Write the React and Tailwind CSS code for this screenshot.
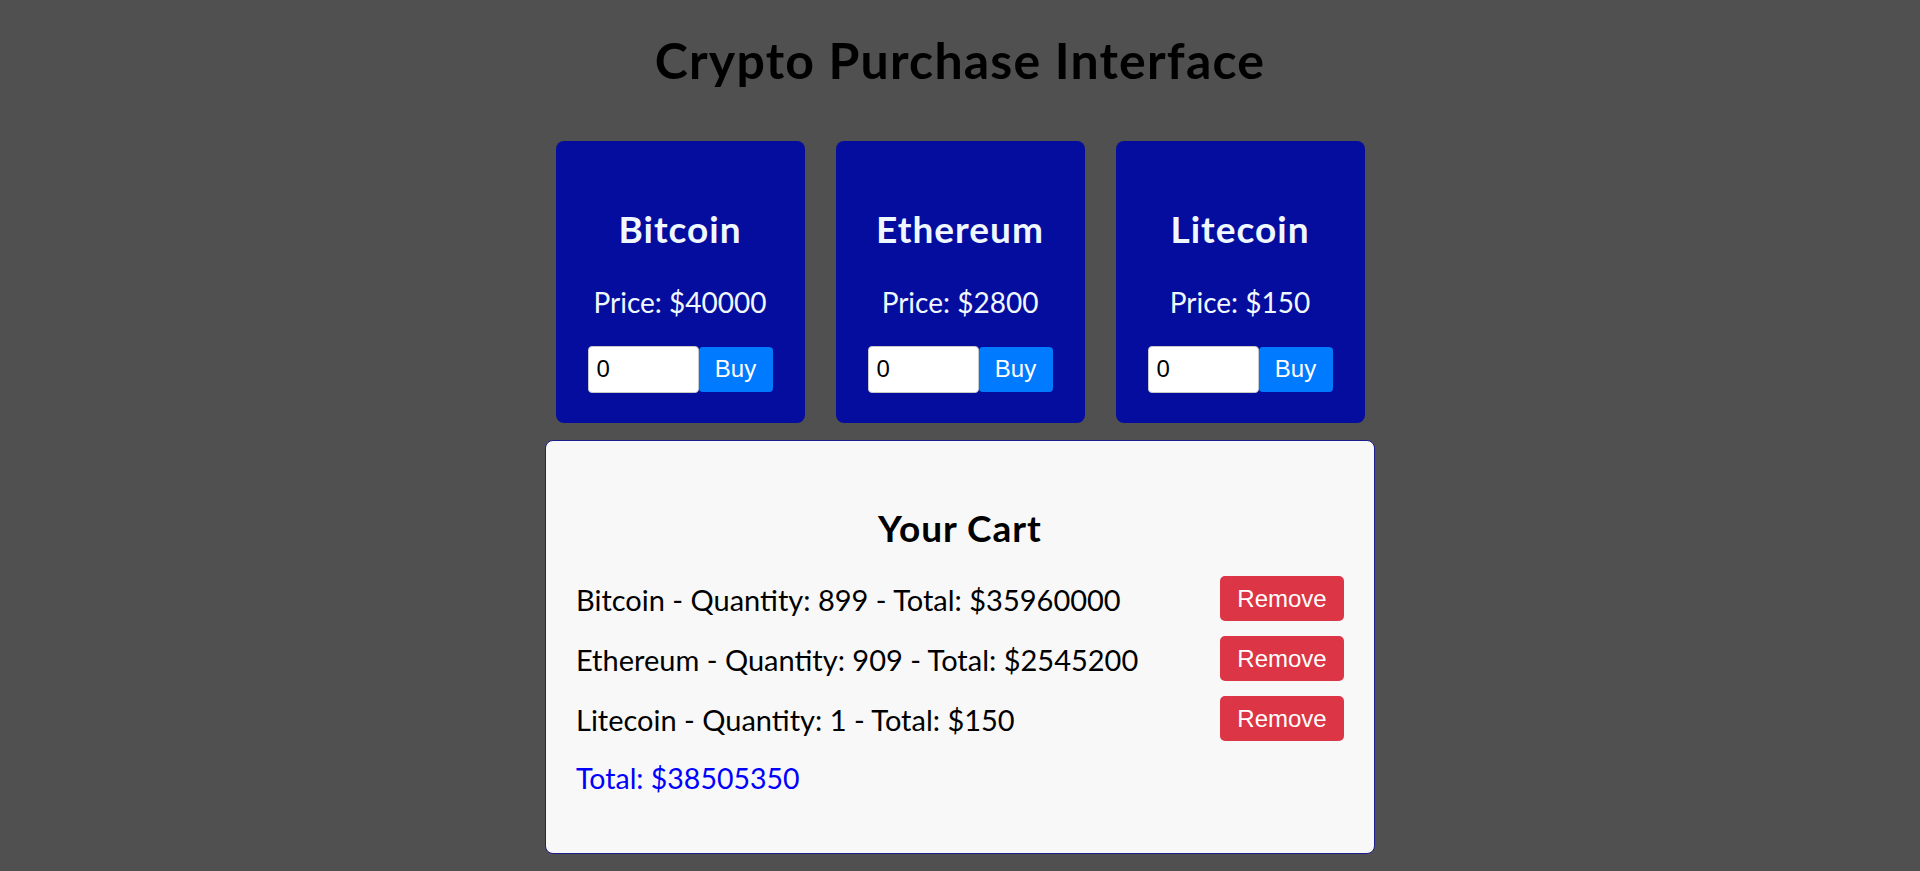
import React, { useState } from 'react';

const coins = [
  { name: 'Bitcoin', price: 40000 },
  { name: 'Ethereum', price: 2800 },
  { name: 'Litecoin', price: 150 },
];

const initialCart = [
  { name: 'Bitcoin', price: 40000, quantity: 899 },
  { name: 'Ethereum', price: 2800, quantity: 909 },
  { name: 'Litecoin', price: 150, quantity: 1 },
];

const App = () => {
  const [cart, setCart] = useState(initialCart);
  const [amounts, setAmounts] = useState({ Bitcoin: 0, Ethereum: 0, Litecoin: 0 });

  const buy = (coin) => {
    const qty = Number(amounts[coin.name]) || 0;
    if (qty <= 0) return;
    setCart((prev) => {
      const found = prev.find((c) => c.name === coin.name);
      if (found) {
        return prev.map((c) => (c.name === coin.name ? { ...c, quantity: c.quantity + qty } : c));
      }
      return [...prev, { ...coin, quantity: qty }];
    });
  };

  const removeItem = (name) => setCart((prev) => prev.filter((c) => c.name !== name));

  const total = cart.reduce((sum, c) => sum + c.price * c.quantity, 0);

  return (
    <div
      className="min-h-[871px] bg-[#505050] flex flex-col items-center"
      style={{ fontFamily: 'Lato, "Open Sans", sans-serif' }}
    >
      <h1 className="pt-[30px] text-[50px] leading-[1.2] font-bold tracking-[1.2px] text-black">
        Crypto Purchase Interface
      </h1>

      {/* Coin cards */}
      <div className="mt-[51px] flex gap-[31px]">
        {coins.map((coin) => (
          <div
            key={coin.name}
            className="w-[249px] h-[282px] bg-[#050d9f] rounded-[8px] flex flex-col items-center pt-[66px] text-[#f0f8ff]"
          >
            <h2 className="text-[37px] leading-[1.2] font-bold tracking-[1px]">{coin.name}</h2>
            <p className="mt-[35px] text-[28px] leading-[1.2]">Price: ${coin.price}</p>
            <div className="mt-[26px] flex items-center">
              <input
                type="number"
                value={amounts[coin.name]}
                onChange={(e) => setAmounts({ ...amounts, [coin.name]: e.target.value })}
                className="w-[111px] h-[47px] bg-white border border-[#c8c8c8] rounded-[4px] pl-[8px] text-[24px] text-black outline-none [appearance:textfield]"
                style={{ fontFamily: '"Liberation Sans", Arial, sans-serif' }}
              />
              <button
                onClick={() => buy(coin)}
                className="w-[74px] h-[45px] bg-[#007bff] text-white text-[24px] rounded-[4px]"
                style={{ fontFamily: '"Liberation Sans", Arial, sans-serif' }}
              >
                Buy
              </button>
            </div>
          </div>
        ))}
      </div>

      {/* Cart */}
      <div className="mt-[17px] w-[830px] h-[414px] bg-[#f8f8f8] border border-[#1c1c8c] rounded-[8px] px-[30px] pt-[65px]">
        <h2 className="text-center text-[37px] leading-[1.2] font-bold tracking-[1px] text-black">Your Cart</h2>
        <div className="mt-[26px] flex flex-col gap-[15px]">
          {cart.map((item) => (
            <div key={item.name} className="flex items-center justify-between h-[45px]">
              <span className="text-[29px] leading-[1.2] text-black pt-[3px]">
                {item.name} - Quantity: {item.quantity} - Total: ${item.price * item.quantity}
              </span>
              <button
                onClick={() => removeItem(item.name)}
                className="w-[124px] h-[45px] bg-[#dc3545] text-white text-[24px] rounded-[5px]"
                style={{ fontFamily: '"Liberation Sans", Arial, sans-serif' }}
              >
                Remove
              </button>
            </div>
          ))}
        </div>
        <p className="mt-[20px] text-[28.5px] leading-[1.2] text-[#0000ff]">Total: ${total}</p>
      </div>
    </div>
  );
};

export default App;
